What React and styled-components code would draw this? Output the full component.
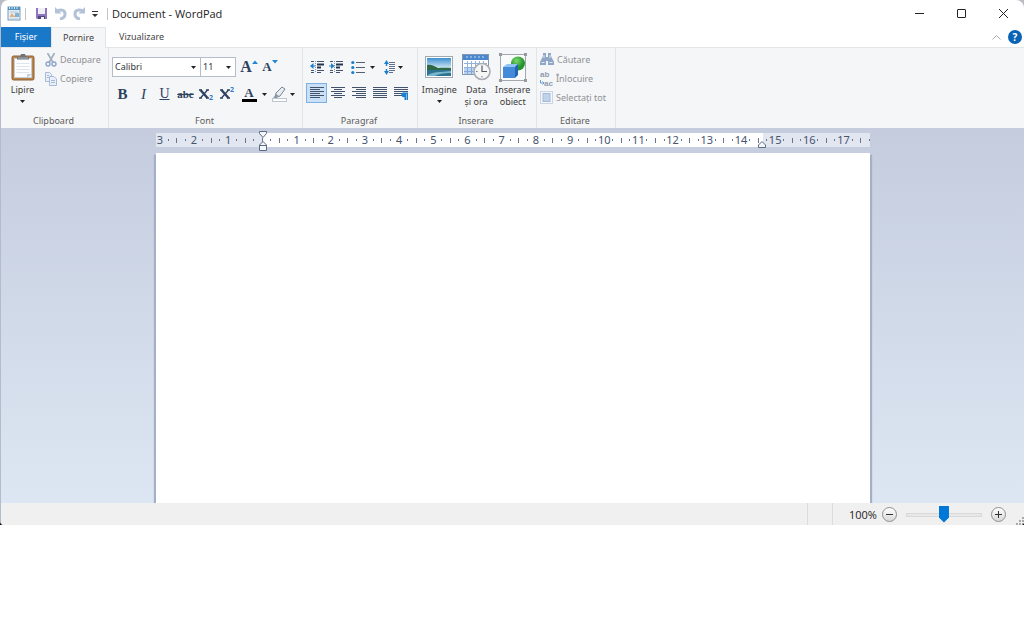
import React, { useState } from 'react';
import styled, { createGlobalStyle, css } from 'styled-components';

const GlobalStyle = createGlobalStyle`
  * {
    box-sizing: border-box;
  }

  body {
    margin: 0;
    background: #fff;
    color: #3b3b3b;
    font-family: 'Noto Sans', 'Open Sans', sans-serif;
    font-size: 9px;
    line-height: 12px;
  }

  button, input, select, textarea {
    margin: 0;
    padding: 0;
    border: 0;
    background: none;
    color: inherit;
    font: inherit;
  }

  svg {
    display: block;
    flex: none;
  }
`;

const Desktop = styled.div`
  background: linear-gradient(to bottom, #b9bcc2, #8f96ac 90%, #111);
`;

const Window = styled.main`
  display: flex;
  flex-direction: column;
  border-left: 1px solid #b3bbcc;
  border-radius: 8px 8px 4px 4px;
  overflow: hidden;
  background: #fff;
`;

/* title bar */
const TitleBar = styled.header`
  display: flex;
  align-items: center;
  height: 27px;
  padding-left: 6px;
`;

const QuickTools = styled.div`
  display: flex;
  align-items: center;
  gap: 5px;
  padding: 0 8px;
  margin: 0 4px;
  border: solid #c4c4c4;
  border-width: 0 1px;
  height: 12px;
`;

const IconButton = styled.button`
  display: flex;
  align-items: center;
  justify-content: center;
  width: ${(props) => props.$width || 14}px;
  height: ${(props) => props.$height || 14}px;
`;

const Title = styled.h1`
  flex: 1;
  margin: 0;
  color: #1c1c1c;
  font-family: 'Open Sans', 'Noto Sans', sans-serif;
  font-size: 11px;
  font-weight: 400;
  line-height: 16px;
`;

/* tabs */
const TabBar = styled.nav`
  display: flex;
  align-items: center;
  height: 21px;
  border-bottom: 1px solid #e4e5e7;
`;

const Tab = styled.button`
  height: 21px;
  padding: 0 13px;
  color: #444;

  ${(props) =>
    props.$file &&
    css`
      height: 20px;
      width: 50px;
      padding: 0;
      background: #1a78c9;
      color: #fff;
    `}

  ${(props) =>
    props.$active &&
    css`
      width: 55px;
      padding: 0;
      border: solid #e4e5e7;
      border-width: 1px 1px 0;
      background: #f5f6f7;
    `}
`;

const TabTools = styled.div`
  display: flex;
  gap: 5px;
  margin-left: auto;
  padding-right: 2px;
`;

/* ribbon */
const Ribbon = styled.div`
  display: flex;
  height: 80px;
  background: #f5f6f7;
`;

const GroupBox = styled.section`
  display: flex;
  flex-direction: column;
  width: ${(props) => props.$width}px;
  padding: 2px 5px 1px 3px;
  border-right: 1px solid #e3e4e6;
`;

const GroupBody = styled.div`
  display: flex;
  flex: 1;
  gap: ${(props) => props.$gap || 0}px;
`;

const GroupName = styled.h2`
  margin: 0;
  color: #5c5c5c;
  font-size: 9px;
  font-weight: 400;
  line-height: 12px;
  text-align: center;
`;

const Stack = styled.div`
  display: flex;
  flex-direction: column;
  padding-top: ${(props) => props.$top || 0}px;
  gap: ${(props) => props.$gap || 0}px;
`;

const Row = styled.div`
  display: flex;
  align-items: center;
  gap: ${(props) => props.$gap || 0}px;
`;

const BigButton = styled.button`
  display: flex;
  flex-direction: column;
  align-items: center;
  width: 37px;
  height: 59px;
  white-space: nowrap;

  > span {
    display: flex;
    align-items: center;
    height: 34px;
  }

  > svg {
    margin-top: 4px;
  }
`;

const SmallButton = styled.button`
  display: flex;
  align-items: center;
  gap: 3px;
  height: 19px;
  color: #8e9196;
  white-space: nowrap;
`;

const ToolButton = styled.button`
  display: flex;
  align-items: center;
  justify-content: center;
  width: ${(props) => props.$width || 21}px;
  height: 20px;
  border: 1px solid transparent;

  &[aria-pressed='true'] {
    border-color: #7eb0e4;
    background: #c9e0f7;
  }
`;

const Glyph = styled.span`
  color: #2d4160;
  font-family: 'Liberation Serif', serif;
  font-size: ${(props) => props.$size || 15}px;
  font-weight: ${(props) => (props.$bold ? 700 : 400)};
  font-style: ${(props) => (props.$italic ? 'italic' : 'normal')};
  text-decoration: ${(props) => props.$line || 'none'};
`;

const Combo = styled.label`
  display: grid;
  align-items: center;
  width: ${(props) => props.$width}px;
  height: 20px;
  border: 1px solid #b5bccb;
  background: #fff;

  & + & {
    margin-left: -1px;
  }

  > * {
    grid-area: 1 / 1;
  }

  > svg {
    justify-self: end;
    margin-right: 4px;
    pointer-events: none;
  }

  select {
    appearance: none;
    width: 100%;
    height: 18px;
    padding-left: 2px;
    color: #333;
  }
`;

/* document area */
const Workspace = styled.div`
  display: flex;
  flex-direction: column;
  align-items: center;
  padding-top: 5px;
  background: linear-gradient(to bottom, #c4ccde, #dde7f3);
`;

const RulerBar = styled.div`
  position: relative;
  width: 100%;
  max-width: 714px;
  height: 20px;
`;

const Scale = styled.div`
  display: flex;
  height: 14px;
  overflow: hidden;
  background: linear-gradient(
    to right,
    #e1e6f0 15%,
    #fff 15% 85%,
    #e1e6f0 85%
  );
`;

const Mark = styled.span`
  display: flex;
  flex: 0 0 calc(100% / 83.5);
  align-items: center;
  justify-content: center;
  min-width: 0;
  color: #46546e;
  font-size: 11px;
  line-height: 14px;

  &:empty::before {
    content: '';
    width: 1px;
    height: ${(props) => (props.$half ? 5 : 2)}px;
    background: #6b7588;
  }
`;

const Indent = styled.svg`
  position: absolute;
  top: ${(props) => props.$top}px;
  left: ${(props) => props.$left}%;
  margin-left: -4px;
`;

const Paper = styled.textarea`
  display: block;
  width: 100%;
  max-width: 714px;
  height: 350px;
  padding: 40px 107px;
  background: #fff;
  box-shadow: -2px 2px 1px #a5afc5, 2px 2px 1px #a5afc5;
  font-family: 'Noto Sans', sans-serif;
  font-size: 11px;
  outline: 0;
  resize: none;
`;

/* status bar */
const StatusBar = styled.footer`
  position: relative;
  display: flex;
  justify-content: flex-end;
  height: 22px;
  background: #f0f0f0;
`;

const StatusPart = styled.div`
  width: 25px;
  border-left: 1px solid #dcdcdc;
`;

const Zoom = styled.div`
  display: flex;
  align-items: center;
  gap: 5px;
  width: 192px;
  padding: 1px 0 0 16px;
  border-left: 1px solid #dcdcdc;
  color: #222;
  font-family: 'Open Sans', 'Noto Sans', sans-serif;
  font-size: 11px;
`;

const RoundButton = styled.button`
  display: flex;
  align-items: center;
  justify-content: center;
  flex: none;
  width: 15px;
  height: 15px;
  border: 1px solid #8f8f8f;
  border-radius: 50%;
  background: linear-gradient(to bottom, #fff, #d8d8d8);
`;

const Slider = styled.input`
  appearance: none;
  flex: none;
  width: 76px;
  height: 18px;
  margin: 0 4px;

  &::-webkit-slider-runnable-track {
    height: 4px;
    border: 1px solid #d9d9d9;
    background: #e8e8e8;
  }

  &::-webkit-slider-thumb {
    appearance: none;
    width: 10px;
    height: 17px;
    margin-top: -8px;
    background: #0078d7;
    clip-path: polygon(0 0, 100% 0, 100% 70%, 50% 100%, 0 70%);
  }
`;

const Grip = styled.svg`
  position: absolute;
  right: 0;
  bottom: 0;
`;

const Caret = ({ color = '#222' }) => (
  <svg width="5" height="3" viewBox="0 0 5 3">
    <path d="M0 0h5L2.5 3z" fill={color} />
  </svg>
);

const Lines = ({ widths, align = 'left', children }) => (
  <svg width="14" height="14" viewBox="0 0 14 14">
    {widths.map((w, i) => (
      <rect
        key={i}
        x={{ left: 0, center: (14 - w) / 2, right: 14 - w }[align]}
        y={1 + i * 2}
        width={w}
        height="1"
        fill="#43536b"
      />
    ))}
    {children}
  </svg>
);

const IndentIcon = ({ right }) => (
  <svg width="14" height="14" viewBox="0 0 14 14">
    <path d="M1 1.5h3M7 1.5h7M7 10.5h7M1 10.5h3M1 12.5h3M7 12.5h4" stroke="#43536b" />
    <path d="M7 4.5h7M7 7.500h4" stroke="#26364f" strokeWidth="2" />
    <path d="M5.5 1v12" stroke="#8091aa" strokeDasharray="1 1" />
    <path
      d={right ? 'M0 5.5h2V3l3.500 3L2 9V6.500H0z' : 'M5 5.500H3.500V3L0 6l3.500 3V6.500H5z'}
      fill="#1b7fd0"
    />
  </svg>
);

const BulletsIcon = () => (
  <svg width="15" height="15" viewBox="0 0 15 15">
    <path d="M5 2.5h9M5 7.5h9M5 12.5h9" stroke="#526178" />
    <g fill="#1b7fd0">
      <circle cx="1.8" cy="2.5" r="1.6" />
      <circle cx="1.8" cy="7.5" r="1.6" />
      <circle cx="1.8" cy="12.5" r="1.6" />
    </g>
  </svg>
);

const SpacingIcon = () => (
  <svg width="12" height="15" viewBox="0 0 12 15">
    <path d="M5 2.500h6M5 4.500h6M5 6.500h6M5 8.500h6M5 10.500h6M5 12.500h4" stroke="#62718a" />
    <path d="M2.500 0 5 4H3.200v2H1.800V4H0zM2.500 15 5 11H3.200V9H1.800v2H0z" fill="#1b7fd0" />
  </svg>
);

const AppIcon = () => (
  <svg width="14" height="15" viewBox="0 0 14 15">
    <rect x="1" y="1" width="12" height="13" fill="#e4edf5" stroke="#7d9bb5" />
    <path d="M1 1h12v3H1z" fill="#4f91c2" />
    <path d="M2.5 1v2M5 1v2M7.5 1v2M10 1v2" stroke="#d5e8f5" />
    <path d="M3 6h8M3 13h8" stroke="#b4c6d6" />
    <path d="m3 10 2-3 2 3 2-2v3H3z" fill="#e4b07a" />
    <path d="M8 7h4v4H8z" fill="#7fb2d4" />
  </svg>
);

const SaveIcon = () => (
  <svg width="13" height="13" viewBox="0 0 13 13">
    <path d="M1 1h11v11H2l-1-1z" fill="#8e76bd" />
    <path d="M3 1h7v6H3z" fill="#f0eef8" />
    <path d="M3 9h7v3H3z" fill="#54457f" />
    <path d="M6 10h3v2H6z" fill="#eee" />
  </svg>
);

const UndoIcon = ({ flip }) => (
  <svg width="13" height="13" viewBox="0 0 13 13">
    <g transform={flip ? 'matrix(-1 0 0 1 13 0)' : undefined}>
      <path d="M3 4c5-2 8-.4 8 3 0 2.500-2 4.500-5 5" fill="none" stroke="#b3c2d8" strokeWidth="3" />
      <path d="M1 0v6.500h6.500z" fill="#b3c2d8" />
    </g>
  </svg>
);

const PasteIcon = () => (
  <svg width="24" height="28" viewBox="0 0 24 28">
    <rect x="1" y="3" width="22" height="24" rx="1.500" fill="#b9854c" stroke="#8a6238" />
    <rect x="3.500" y="5.500" width="17" height="19" fill="#fdfdfd" stroke="#c9cdd3" />
    <path d="M5.500 10.500h13M5.500 13.500h13M5.500 16.500h13M5.500 19.500h13" stroke="#dde4ec" />
    <path d="M16 25v-4h5z" fill="#c7d1dc" />
    <path d="M6 6.500V4h3l1-3h4l1 3h3v2.500z" fill="#6d747e" />
    <path d="M7 5h10" stroke="#aab1ba" />
  </svg>
);

const CutIcon = () => (
  <svg width="12" height="14" viewBox="0 0 12 14" fill="none">
    <path d="M2.500 0 8 9.500M9.500 0 4 9.500" stroke="#a3b0c2" strokeWidth="1.700" />
    <circle cx="3" cy="11" r="2" stroke="#8ca5ca" strokeWidth="1.400" />
    <circle cx="9" cy="11" r="2" stroke="#8ca5ca" strokeWidth="1.400" />
  </svg>
);

const CopyIcon = () => (
  <svg width="12" height="14" viewBox="0 0 12 14" fill="#e8eff9" stroke="#a6bbd8">
    <path d="M.5.5h4l2 2v7h-6z" />
    <path d="M2 3.500h2M2 5.500h2" />
    <path d="M4.500 4.500h4.500l2.500 2.500v6.500h-7z" />
    <path d="M6 8.500h4M6 10.500h4" />
  </svg>
);

const ImageIcon = () => (
  <svg width="28" height="22" viewBox="0 0 28 22">
    <defs>
      <linearGradient id="sky" x2="0" y2="1">
        <stop stopColor="#3e8fd0" />
        <stop offset="1" stopColor="#dff1f5" />
      </linearGradient>
    </defs>
    <rect x=".5" y=".5" width="27" height="21" fill="#fff" stroke="#a3a9b2" />
    <path d="M2 2h24v11H2z" fill="url(#sky)" />
    <path d="M2 9c4-1 7 1 11 3 5-.5 9-.5 13 0v3H2z" fill="#2f6844" />
    <path d="M2 14h24v6H2z" fill="#2e7392" />
    <path d="M2 20c3-3 8-4 14-4l10-1v2c-8 0-12 1-16 3z" fill="#79b6cd" />
  </svg>
);

const DateIcon = () => (
  <svg width="29" height="28" viewBox="0 0 29 28">
    <rect x=".5" y="1.500" width="26" height="20" fill="#fff" stroke="#8197b4" />
    <path d="M1 2h25v5H1z" fill="#4a87cc" />
    <path d="M5 3v2M9 3v2M13 3v2M17 3v2M21 3v2" stroke="#c6dcf3" />
    <path d="M2 10.500h23M2 14.500h23M2 18.500h23M5.500 8v13M9.500 8v13M13.500 8v13M17.500 8v13M21.500 8v13" stroke="#91b4dc" />
    <path d="M2 15h11v6H2z" fill="#6d9edb" fillOpacity=".45" />
    <circle cx="20" cy="18.500" r="8" fill="#f5f6f6" stroke="#a9aeb4" strokeWidth="1.600" />
    <path d="M20 12.500v6h5" fill="none" stroke="#555c66" strokeWidth="1.200" />
    <path d="M20 23v1.500M14 18.500h1.500" stroke="#777" />
  </svg>
);

const ObjectIcon = () => (
  <svg width="28" height="29" viewBox="0 0 28 29">
    <defs>
      <radialGradient id="ball" cx=".4" cy=".3">
        <stop stopColor="#7ed96a" />
        <stop offset="1" stopColor="#249330" />
      </radialGradient>
    </defs>
    <rect x="1.500" y="1.500" width="25" height="26" fill="#f9fafb" stroke="#a3a8af" />
    <path d="M0 0h3v3H0zM25 0h3v3h-3zM0 26h3v3H0zM25 26h3v3h-3z" fill="#999" />
    <circle cx="19" cy="10.500" r="7" fill="url(#ball)" />
    <path d="m4 14 4-3h11l-3 3z" fill="#91c4f3" />
    <path d="M4 14h12v11H4z" fill="#438ad9" />
    <path d="m16 14 3-3v11l-3 3z" fill="#2464b5" />
  </svg>
);

const FindIcon = () => (
  <svg width="14" height="13" viewBox="0 0 14 13" fill="#8fa6c6">
    <path d="M3 0h3v4h2V0h3v3l3 6v3H8V8H6v4H0V9l3-6z" />
    <path d="M1.500 9.500h3M9.500 9.500h3M4 2v3M10 2v3" stroke="#e2eaf5" />
  </svg>
);

const SelectIcon = () => (
  <svg width="13" height="13" viewBox="0 0 13 13">
    <rect x=".5" y=".5" width="12" height="12" fill="none" stroke="#a0b4ce" strokeDasharray="1 1" />
    <rect x="3" y="2.500" width="7" height="8" fill="#bed2ea" stroke="#a3bbd9" />
  </svg>
);

const ReplaceMark = styled.span`
  display: flex;
  flex-direction: column;
  width: 13px;
  color: #8e9cb2;
  font-family: 'Liberation Sans', sans-serif;
  font-size: 8px;
  font-weight: 700;
  line-height: 9px;
  text-align: left;

  > span:last-child {
    display: flex;
    align-items: center;
  }
`;

const SizeIcon = ({ down }) => (
  <svg width="6" height="14" viewBox="0 0 6 14">
    <path d={down ? 'M0 0h6L3 3.500z' : 'M0 4h6L3 .5z'} fill="#2585d5" />
  </svg>
);

const ScriptIcon = ({ children, top }) => (
  <svg width="15" height="18" viewBox="0 -2 15 18">
    <path d="m1.500 3 7 8" stroke="#2d4160" strokeWidth="2.400" />
    <path d="M8.500 3 1.500 11M0 3h3M7 3h3M0 11h3M7 11h3" stroke="#2d4160" strokeWidth="1.300" />
    <text x="10" y={top ? 5 : 13} fontSize="7" fontWeight="700" fill="#2b7bc8">
      {children}
    </text>
  </svg>
);

const PenIcon = () => (
  <svg width="15" height="16" viewBox="0 0 15 16">
    <path d="m4 7 6-6 3 2-5 7-5 2z" fill="#e9edf2" stroke="#77859a" />
    <path d="m1 12 3-4 3 2z" fill="#8896a8" />
    <rect x=".5" y="12.500" width="14" height="3" fill="#fff" stroke="#bfc6d0" />
  </svg>
);

const ColorIcon = styled.span`
  display: block;
  width: 15px;
  height: 16px;
  border-bottom: 3px solid #000;
  color: #2d4160;
  font-family: 'Liberation Serif', serif;
  font-size: 13px;
  font-weight: 700;
  line-height: 13px;
  text-align: center;
`;

const Group = ({ name, width, gap, children }) => (
  <GroupBox $width={width} aria-label={name}>
    <GroupBody $gap={gap}>{children}</GroupBody>
    <GroupName>{name}</GroupName>
  </GroupBox>
);

const alignments = [
  { id: 'left', widths: [14, 10, 14, 10, 14, 10] },
  { id: 'center', widths: [14, 8, 14, 8, 14, 8] },
  { id: 'right', widths: [14, 10, 14, 10, 14, 10] },
  { id: 'justify', widths: [14, 14, 14, 14, 14, 14] },
];

const Ruler = () => (
  <RulerBar>
    <Scale>
      {Array.from({ length: 84 }, (_, i) => {
        const pos = i - 12;
        const isUnit = pos % 4 === 0;
        return (
          <Mark key={i} $half={pos % 2 === 0}>
            {isUnit && pos !== 0 ? Math.abs(pos / 4) : null}
          </Mark>
        );
      })}
    </Scale>
    <Indent $left={15} $top={-2} width="8" height="20" viewBox="0 0 8 20">
      <g fill="#f4f6fa" stroke="#5c6c84">
        <path d="M.5.5h7v2L4 6.500.5 2.500z" />
        <path d="M4 10.500 7.500 14v5.500h-7V14zM.5 14.500h7" />
      </g>
    </Indent>
    <Indent $left={85} $top={8} width="8" height="7" viewBox="0 0 8 7">
      <path d="M4 .5 7.500 4v2.500h-7V4z" fill="#f4f6fa" stroke="#5c6c84" />
    </Indent>
  </RulerBar>
);

export default function App() {
  const [align, setAlign] = useState('left');
  const [zoom, setZoom] = useState(50);

  return (
    <>
      <GlobalStyle />
      <Desktop>
        <Window>
          <TitleBar>
            <AppIcon />
            <QuickTools>
              <IconButton aria-label="Salvare">
                <SaveIcon />
              </IconButton>
              <IconButton aria-label="Anulare">
                <UndoIcon />
              </IconButton>
              <IconButton aria-label="Refacere">
                <UndoIcon flip />
              </IconButton>
              <IconButton $width={8} aria-label="Personalizare">
                <svg width="6" height="6" viewBox="0 0 6 6">
                  <path d="M0 0h6v1H0zM0 3h6L3 6z" fill="#333" />
                </svg>
              </IconButton>
            </QuickTools>
            <Title>Document - WordPad</Title>
            <IconButton $width={42} $height={27} aria-label="Minimizare">
              <svg width="9" height="9" viewBox="0 0 9 9">
                <path d="M0 4.500h9" stroke="#222" />
              </svg>
            </IconButton>
            <IconButton $width={42} $height={27} aria-label="Maximizare">
              <svg width="9" height="9" viewBox="0 0 9 9">
                <rect x=".5" y=".5" width="8" height="8" rx=".5" fill="none" stroke="#222" />
              </svg>
            </IconButton>
            <IconButton $width={42} $height={27} aria-label="Închidere">
              <svg width="9" height="9" viewBox="0 0 9 9">
                <path d="m0 0 9 9M9 0 0 9" stroke="#222" />
              </svg>
            </IconButton>
          </TitleBar>

          <TabBar>
            <Tab $file>Fișier</Tab>
            <Tab $active>Pornire</Tab>
            <Tab>Vizualizare</Tab>
            <TabTools>
              <IconButton aria-label="Minimizare panglică">
                <svg width="9" height="5" viewBox="0 0 9 5">
                  <path d="m.5 4.500 4-4 4 4" fill="none" stroke="#aaa" />
                </svg>
              </IconButton>
              <IconButton aria-label="Ajutor">
                <svg width="14" height="14" viewBox="0 0 14 14">
                  <circle cx="7" cy="7" r="7" fill="#0b63b5" />
                  <text x="7" y="11" textAnchor="middle" fontSize="10" fontWeight="700" fill="#fff">
                    ?
                  </text>
                </svg>
              </IconButton>
            </TabTools>
          </TabBar>

          <Ribbon>
            <Group name="Clipboard" width={108} gap={4}>
              <BigButton>
                <span>
                  <PasteIcon />
                </span>
                Lipire
                <Caret />
              </BigButton>
              <Stack>
                <SmallButton>
                  <CutIcon />
                  Decupare
                </SmallButton>
                <SmallButton>
                  <CopyIcon />
                  Copiere
                </SmallButton>
              </Stack>
            </Group>

            <Group name="Font" width={194}>
              <Stack $top={7} $gap={7}>
                <Row>
                  <Combo $width={89}>
                    <select aria-label="Familie font">
                      <option>Calibri</option>
                    </select>
                    <Caret />
                  </Combo>
                  <Combo $width={36}>
                    <select aria-label="Dimensiune font">
                      <option>11</option>
                    </select>
                    <Caret />
                  </Combo>
                  <ToolButton $width={26} aria-label="Mărire font">
                    <Glyph $bold $size={16}>
                      A
                    </Glyph>
                    <SizeIcon />
                  </ToolButton>
                  <ToolButton $width={16} aria-label="Micșorare font">
                    <Glyph $bold $size={13}>
                      A
                    </Glyph>
                    <SizeIcon down />
                  </ToolButton>
                </Row>
                <Row>
                  <ToolButton aria-label="Aldin">
                    <Glyph $bold>B</Glyph>
                  </ToolButton>
                  <ToolButton aria-label="Cursiv">
                    <Glyph $italic>I</Glyph>
                  </ToolButton>
                  <ToolButton aria-label="Subliniat">
                    <Glyph $size={14} $line="underline">
                      U
                    </Glyph>
                  </ToolButton>
                  <ToolButton aria-label="Tăiere text">
                    <Glyph $bold $size={11} $line="line-through">
                      abc
                    </Glyph>
                  </ToolButton>
                  <ToolButton aria-label="Indice">
                    <ScriptIcon>2</ScriptIcon>
                  </ToolButton>
                  <ToolButton aria-label="Exponent">
                    <ScriptIcon top>2</ScriptIcon>
                  </ToolButton>
                  <ToolButton $width={32} aria-label="Culoare text">
                    <Row $gap={5}>
                      <ColorIcon>A</ColorIcon>
                      <Caret />
                    </Row>
                  </ToolButton>
                  <ToolButton $width={27} aria-label="Evidențiere text">
                    <Row $gap={3}>
                      <PenIcon />
                      <Caret />
                    </Row>
                  </ToolButton>
                </Row>
              </Stack>
            </Group>

            <Group name="Paragraf" width={115}>
              <Stack $top={7} $gap={6}>
                <Row>
                  <ToolButton aria-label="Micșorare indent">
                    <IndentIcon />
                  </ToolButton>
                  <ToolButton $width={18} aria-label="Mărire indent">
                    <IndentIcon right />
                  </ToolButton>
                  <ToolButton $width={36} aria-label="Listă">
                    <Row $gap={4}>
                      <BulletsIcon />
                      <Caret />
                    </Row>
                  </ToolButton>
                  <ToolButton $width={24} aria-label="Spațiere linii">
                    <Row $gap={2}>
                      <SpacingIcon />
                      <Caret />
                    </Row>
                  </ToolButton>
                </Row>
                <Row>
                  {alignments.map((v) => (
                    <ToolButton
                      key={v.id}
                      aria-label={`Aliniere ${v.id}`}
                      aria-pressed={align === v.id}
                      onClick={() => setAlign(v.id)}
                    >
                      <Lines widths={v.widths} align={v.id === 'justify' ? 'left' : v.id} />
                    </ToolButton>
                  ))}
                  <ToolButton aria-label="Paragraf">
                    <Lines widths={[14, 14, 14, 8, 8]} align="left">
                      <path d="M9 6.500h5V14h-1.500V8H12v6h-1.500v-3A2.200 2.200 0 0 1 9 6.500z" fill="#1b7fd0" />
                    </Lines>
                  </ToolButton>
                </Row>
              </Stack>
            </Group>

            <Group name="Inserare" width={119}>
              <BigButton>
                <span>
                  <ImageIcon />
                </span>
                Imagine
                <Caret />
              </BigButton>
              <BigButton>
                <span>
                  <DateIcon />
                </span>
                Data
                <br />
                și ora
              </BigButton>
              <BigButton>
                <span>
                  <ObjectIcon />
                </span>
                Inserare
                <br />
                obiect
              </BigButton>
            </Group>

            <Group name="Editare" width={79}>
              <Stack>
                <SmallButton>
                  <FindIcon />
                  Căutare
                </SmallButton>
                <SmallButton>
                  <ReplaceMark aria-hidden="true">
                    <span>ab</span>
                    <span>
                      <svg width="4" height="6" viewBox="0 0 4 6">
                        <path d="M.5 0v3H4M2.500 1.500 4 3 2.500 4.500" fill="none" stroke="#6b9bd1" />
                      </svg>
                      ac
                    </span>
                  </ReplaceMark>
                  Înlocuire
                </SmallButton>
                <SmallButton>
                  <SelectIcon />
                  Selectați tot
                </SmallButton>
              </Stack>
            </Group>
          </Ribbon>

          <Workspace>
            <Ruler />
            <Paper aria-label="Document" spellCheck={false} />
          </Workspace>

          <StatusBar>
            <StatusPart />
            <Zoom>
              <label htmlFor="zoom">100%</label>
              <RoundButton aria-label="Micșorare" onClick={() => setZoom(zoom - 10)}>
                <svg width="7" height="7" viewBox="0 0 7 7">
                  <path d="M0 3.500h7" stroke="#333" />
                </svg>
              </RoundButton>
              <Slider
                id="zoom"
                type="range"
                value={zoom}
                onChange={(e) => setZoom(Number(e.target.value))}
              />
              <RoundButton aria-label="Mărire" onClick={() => setZoom(zoom + 10)}>
                <svg width="7" height="7" viewBox="0 0 7 7">
                  <path d="M0 3.500h7M3.500 0v7" stroke="#333" />
                </svg>
              </RoundButton>
            </Zoom>
            <Grip width="8" height="8" viewBox="0 0 8 8">
              <path d="M6 0h2v2H6zM3 3h2v2H3zM6 3h2v2H6zM0 6h2v2H0zM3 6h2v2H3zM6 6h2v2H6z" fill="#a9a9a9" />
            </Grip>
          </StatusBar>
        </Window>
      </Desktop>
    </>
  );
}
